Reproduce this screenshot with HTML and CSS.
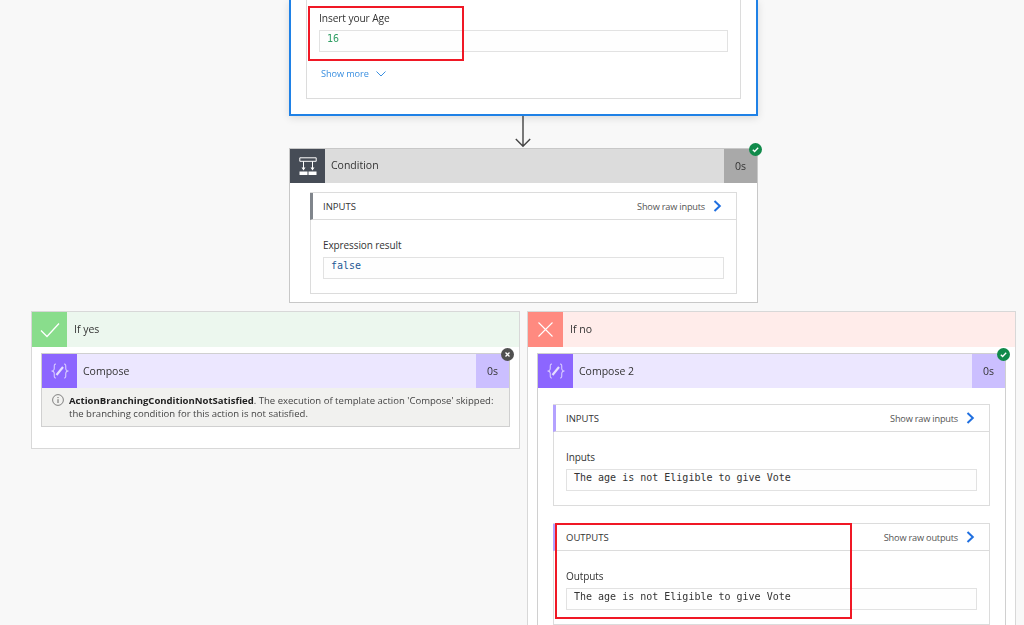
FILE: index.html
```html
<!DOCTYPE html>
<html lang="en">
<head>
<meta charset="utf-8">
<title>Flow run</title>
<link rel="stylesheet" href="styles.css">
</head>
<body>
<main class="page">
  <section class="trigger">
    <div class="trigger-inner">
      <div class="label label-age">Insert your Age</div>
      <div class="value value-age mono green">16</div>
      <div class="more">Show more
        <svg class="more-chev" viewBox="0 0 10 6" width="10" height="6"><path d="M.5.5 5 5 9.5.5" fill="none" stroke="currentColor"/></svg>
      </div>
    </div>
    <div class="mark mark-age"></div>
  </section>

  <svg class="arrow" viewBox="0 0 16 33" width="16" height="33"><path d="M8 0V31M.8 24 8 31.200 15.200 24" fill="none" stroke="#444" stroke-width="1.400"/></svg>

  <section class="card condition">
    <header class="head head-gray">
      <div class="icon icon-gray">
        <svg viewBox="0 0 18 18" width="18" height="18"><path d="M.8.8h16.400v3.500H.8zM4.500 4.300v7M13.500 4.300v7" fill="none" stroke="#fff"/><path d="M.5 14.500h8V18h-8zM9.500 14.500h8V18h-8zM2.500 10.500h4L4.500 13.500zM11.500 10.500h4L13.500 13.500z" fill="#fff"/></svg>
      </div>
      <div class="title">Condition</div>
      <div class="dur dur-gray">0s</div>
    </header>
    <div class="badge badge-ok"><svg viewBox="0 0 13 13" width="13" height="13"><path d="M3.800 6.800 5.600 8.500 9.200 4.800" fill="none" stroke="#fff" stroke-width="1.300"/></svg></div>
    <div class="body">
      <div class="panel">
        <div class="panel-head bar-gray">
          <span class="panel-title">INPUTS</span>
          <span class="raw">Show raw inputs</span>
          <svg class="chev" viewBox="0 0 9 12" width="9" height="12"><path d="M1.500 1 6.800 6 1.500 11" fill="none" stroke="currentColor" stroke-width="2"/></svg>
        </div>
        <div class="panel-body">
          <div class="label">Expression result</div>
          <div class="value mono navy">false</div>
        </div>
      </div>
    </div>
  </section>

  <div class="branches">
    <section class="branch">
      <header class="head head-yes">
        <div class="icon icon-yes">
          <svg viewBox="0 0 20 16" width="20" height="16"><path d="M1 8.500 7 14.500 19 1.500" fill="none" stroke="#fff" stroke-width="1.300"/></svg>
        </div>
        <div class="title">If yes</div>
      </header>
      <div class="branch-body">
        <div class="card action">
          <header class="head head-violet">
            <div class="icon icon-violet">
              <svg viewBox="0 0 20 16" width="20" height="16"><path d="M6 1C3.500 1 4.500 3.500 4.200 6 4 7.500 2.800 8 1.500 8 2.800 8 4 8.500 4.200 10 4.500 12.500 3.500 15 6 15M14 1C16.500 1 15.500 3.500 15.800 6 16 7.500 17.200 8 18.500 8 17.200 8 16 8.500 15.800 10 15.500 12.500 16.500 15 14 15" fill="none" stroke="#d9ccff" stroke-width="1.100"/><path d="M6.500 12 13 4" stroke="#e6deff" stroke-width="2.200"/></svg>
            </div>
            <div class="title">Compose</div>
            <div class="dur dur-violet">0s</div>
          </header>
          <div class="badge badge-skip"><svg viewBox="0 0 13 13" width="13" height="13"><path d="M4.500 4.500 8.500 8.500M8.500 4.500 4.500 8.500" fill="none" stroke="#fff" stroke-width="1.300"/></svg></div>
          <div class="note">
            <svg class="note-icon" viewBox="0 0 12 12" width="12" height="12"><circle cx="6" cy="6" r="5.400" fill="none" stroke="#666" stroke-width=".8"/><path d="M6 5.200V9" stroke="#666"/><path d="M6 3v1.100" stroke="#666"/></svg>
            <p class="note-text"><b>ActionBranchingConditionNotSatisfied</b>. The execution of template action 'Compose' skipped:<br>the branching condition for this action is not satisfied.</p>
          </div>
        </div>
      </div>
    </section>

    <section class="branch">
      <header class="head head-no">
        <div class="icon icon-no">
          <svg viewBox="0 0 15 15" width="15" height="15"><path d="M.5.500 14.500 14.500M14.500.500 .5 14.500" fill="none" stroke="#fff" stroke-width="1.100"/></svg>
        </div>
        <div class="title">If no</div>
      </header>
      <div class="branch-body">
        <div class="card action">
          <header class="head head-violet">
            <div class="icon icon-violet">
              <svg viewBox="0 0 20 16" width="20" height="16"><path d="M6 1C3.500 1 4.500 3.500 4.200 6 4 7.500 2.800 8 1.500 8 2.800 8 4 8.500 4.200 10 4.500 12.500 3.500 15 6 15M14 1C16.500 1 15.500 3.500 15.800 6 16 7.500 17.200 8 18.500 8 17.200 8 16 8.500 15.800 10 15.500 12.500 16.500 15 14 15" fill="none" stroke="#d9ccff" stroke-width="1.100"/><path d="M6.500 12 13 4" stroke="#e6deff" stroke-width="2.200"/></svg>
            </div>
            <div class="title">Compose 2</div>
            <div class="dur dur-violet">0s</div>
          </header>
          <div class="badge badge-ok"><svg viewBox="0 0 13 13" width="13" height="13"><path d="M3.800 6.800 5.600 8.500 9.200 4.800" fill="none" stroke="#fff" stroke-width="1.300"/></svg></div>
          <div class="body body-wide">
            <div class="panel">
              <div class="panel-head bar-violet">
                <span class="panel-title">INPUTS</span>
                <span class="raw">Show raw inputs</span>
                <svg class="chev" viewBox="0 0 9 12" width="9" height="12"><path d="M1.500 1 6.800 6 1.500 11" fill="none" stroke="currentColor" stroke-width="2"/></svg>
              </div>
              <div class="panel-body">
                <div class="label">Inputs</div>
                <div class="value mono">The age is not Eligible to give Vote</div>
              </div>
            </div>
            <div class="panel">
              <div class="panel-head bar-violet">
                <span class="panel-title">OUTPUTS</span>
                <span class="raw">Show raw outputs</span>
                <svg class="chev" viewBox="0 0 9 12" width="9" height="12"><path d="M1.500 1 6.800 6 1.500 11" fill="none" stroke="currentColor" stroke-width="2"/></svg>
              </div>
              <div class="panel-body">
                <div class="label">Outputs</div>
                <div class="value mono">The age is not Eligible to give Vote</div>
              </div>
              <div class="mark mark-out"></div>
            </div>
          </div>
        </div>
      </div>
    </section>
  </div>
</main>
</body>
</html>
```

FILE: styles.css
```css
* { box-sizing: border-box; }
html, body { margin: 0; height: 100%; overflow: hidden; }
body {
  background: #f8f8f8;
  color: #333;
  font-family: "Open Sans", "Noto Sans", sans-serif;
  font-size: 10.500px;
}
.page { height: 625px; overflow: hidden; display: flex; flex-direction: column; filter: blur(.35px); }

.trigger {
  position: relative;
  width: 469px;
  height: 116px;
  margin-left: 289px;
  padding: 0 15px 15px;
  background: #fff;
  border: 2px solid #1f81e6;
  border-top: 0;
  box-shadow: 0 2px 8px rgba(0,0,0,.12);
}
.trigger-inner {
  height: 99px;
  padding: 10px 12px 0 12px;
  border: 1px solid #dcdcdc;
  border-top: 0;
}
.label { font-size: 10px; letter-spacing: -.1px; line-height: 16px; color: #333; font-weight: 500; }
.label-age { font-size: 10.200px; }
.value {
  height: 22px;
  margin-top: 4px;
  padding: 1px 8px 0;
  border: 1px solid #e2e2e2;
  background: #fefefe;
}
.value-age { padding-left: 7px; }
.mono { font-family: "DejaVu Sans Mono", "Liberation Mono", monospace; font-size: 10px; line-height: 14px; color: #333; }
.green { color: #2f9e63; }
.navy { color: #1f5a96; }
.more { margin-top: 15px; line-height: 14px; color: #3a8fe0; font-size: 9.200px; letter-spacing: -.1px; display: flex; align-items: center; gap: 7px; padding-left: 2px; }
.more-chev { display: block; }

.arrow { display: block; margin-left: 515px; margin-top: -1px; flex: none; }

.card { position: relative; background: #fff; border: 1px solid #c8c8c8; }
.condition { width: 469px; height: 155px; margin-left: 289px; flex: none; }
.condition .title { padding-bottom: 3px; }

.head { display: flex; align-items: center; height: 35px; }
.card > .head { height: 34px; }
.card > .head .icon, .card > .head .dur { height: 34px; }
.head-gray { background: #dcdcdc; }
.head-violet { background: #ece7ff; }
.head-yes { background: #ecf7ee; }
.head-no { background: #ffecea; }

.icon { width: 35px; height: 35px; flex: none; display: flex; align-items: center; justify-content: center; }
.icon-gray { background: #464c56; }
.icon-violet { background: #8c66ff; }
.icon-yes { background: #89dd8c; }
.icon-no { background: #ff8a80; }

.title { flex: 1; padding-left: 7px; padding-bottom: 1px; font-size: 10.500px; color: #333; }
.card > .head .title { padding-left: 6px; }
.dur { width: 33px; height: 35px; flex: none; display: flex; align-items: center; justify-content: center; font-size: 10.500px; }
.dur-gray { background: #a9a9a9; }
.dur-violet { background: #cbbfff; }

.badge { position: absolute; width: 13px; height: 13px; border-radius: 50%; display: flex; top: -6px; right: -5px; }
.badge-ok { background: #108a4a; }
.badge-skip { background: #505050; }

.body { padding: 9px 20px 8px; }
.body-wide { padding: 16px 15px 0; display: flex; flex-direction: column; gap: 17px; }

.panel { position: relative; border: 1px solid #dcdcdc; background: #fff; }
.panel-head {
  display: flex;
  align-items: center;
  height: 27px;
  padding: 0 14px 0 10px;
  border-bottom: 1px solid #dcdcdc;
  border-left: 3px solid #8a8f96;
  margin-left: -1px;
}
.bar-gray { border-left-color: #80858c; }
.bar-violet { border-left-color: #b4a2ff; }
.panel-title { flex: 1; font-size: 9.500px; color: #333; }
.raw { font-size: 9.200px; letter-spacing: -.2px; color: #555; margin-right: 8px; }
.chev { color: #1f6fe0; display: block; }
.panel-body { padding: 17px 12px 14px 12px; }
.panel-body .value { margin-top: 4px; padding-left: 7px; }

.branches { display: grid; grid-template-columns: 489px 489px; gap: 7px; padding-left: 31px; margin-top: 8px; flex: none; }
.branch { background: #fff; border: 1px solid #d8d8d8; height: 138px; }
.branch:last-child { height: 400px; }
.branch-body { padding: 6px 9px 0; }
.action { border-color: #d0d0d0; }

.note { display: flex; gap: 5px; padding: 6px 10px 0; height: 38px; background: #f1f1ef; }
.note-icon { flex: none; }
.note-text { margin: 0; font-size: 9.550px; line-height: 13px; color: #444; }
.note-text b { color: #222; }

.mark { position: absolute; border: 2px solid #f01825; pointer-events: none; }
.mark-age { left: 17px; top: 6px; width: 156px; height: 55px; }
.mark-out { left: 1px; top: -1px; width: 297px; height: 96px; }
```
